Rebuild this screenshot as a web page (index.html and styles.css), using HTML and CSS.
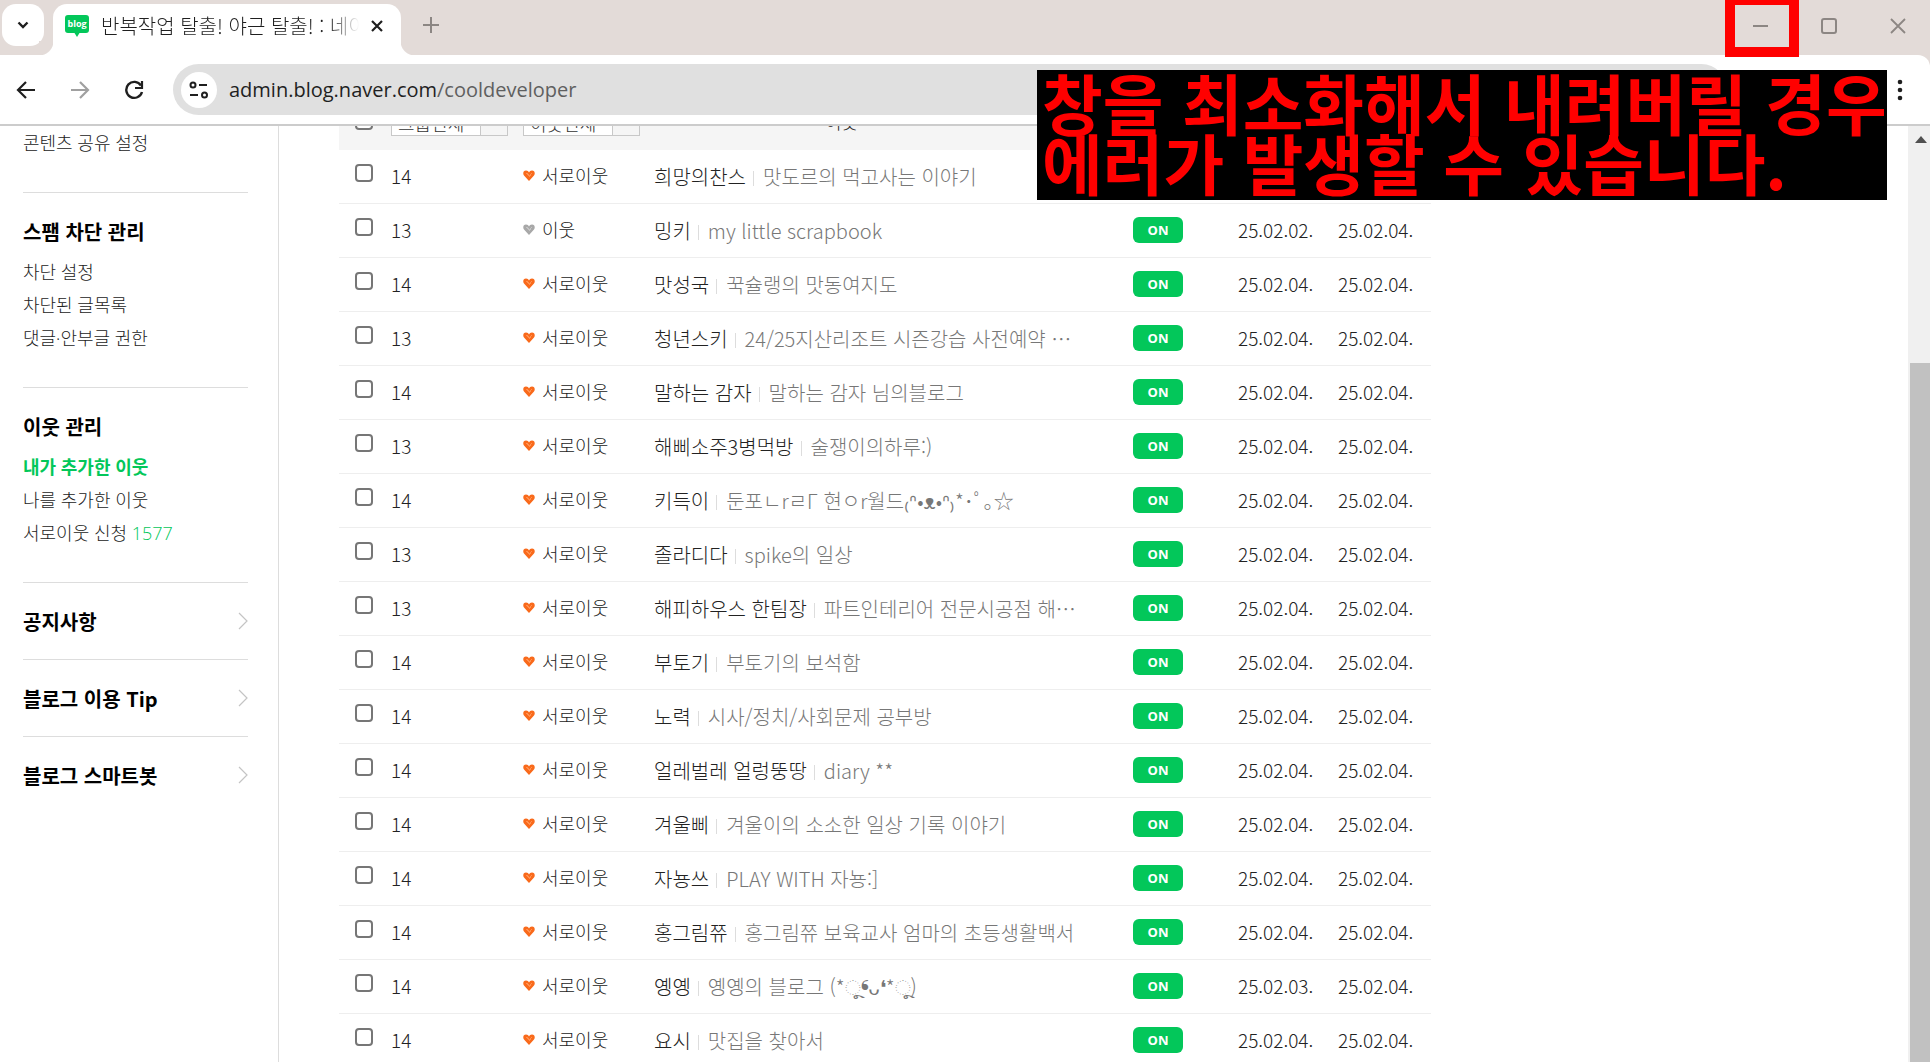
FILE: index.html
```html
<!DOCTYPE html>
<html lang="ko">
<head>
<meta charset="utf-8">
<title>반복작업 탈출! 야근 탈출! : 네이버 블로그</title>
<link rel="stylesheet" href="styles.css">
</head>
<body>
<header class="browser">
  <div class="tabstrip">
    <button class="tab-search" aria-label="탭 검색"><svg width="12" height="8" viewBox="0 0 12 8"><path d="M1.500 1.500 6 6l4.500-4.500" fill="none" stroke="#1f1f1f" stroke-width="2.400"/></svg></button>
    <div class="tab">
      <svg class="favicon" width="24" height="22" viewBox="0 0 24 22"><path d="M3 0h18a3 3 0 0 1 3 3v12a3 3 0 0 1-3 3h-6.500L12 22l-2.500-4H3a3 3 0 0 1-3-3V3a3 3 0 0 1 3-3z" fill="#03c75a"/><text x="12" y="12" text-anchor="middle" class="favicon-text">blog</text></svg>
      <span class="tab-title">반복작업 탈출! 야근 탈출! : 네이</span>
      <button class="icon-btn" aria-label="탭 닫기"><svg width="12" height="12" viewBox="0 0 12 12"><path d="M1 1l10 10M11 1 1 11" stroke="#1f1f1f" stroke-width="2.200"/></svg></button>
    </div>
    <button class="icon-btn new-tab" aria-label="새 탭"><svg width="16" height="16" viewBox="0 0 16 16"><path d="M8 0v16M0 8h16" stroke="#8c8683" stroke-width="2"/></svg></button>
    <div class="window-controls">
      <button class="icon-btn" aria-label="최소화"><svg width="16" height="16" viewBox="0 0 16 16"><path d="M1 8h15" stroke="#8c8683" stroke-width="2"/></svg></button>
      <button class="icon-btn" aria-label="최대화"><svg width="16" height="16" viewBox="0 0 16 16"><rect x="1" y="1" width="14" height="14" rx="2" fill="none" stroke="#8c8683" stroke-width="2"/></svg></button>
      <button class="icon-btn" aria-label="닫기"><svg width="16" height="16" viewBox="0 0 16 16"><path d="M1 1l14 14M15 1 1 15" stroke="#8c8683" stroke-width="1.800"/></svg></button>
    </div>
  </div>
  <div class="toolbar">
    <button class="icon-btn nav" aria-label="뒤로"><svg width="20" height="18" viewBox="0 0 20 18"><path d="M19 9H2M10 1 2 9l8 8" fill="none" stroke="#1f1f1f" stroke-width="2.200"/></svg></button>
    <button class="icon-btn nav" aria-label="앞으로"><svg width="20" height="18" viewBox="0 0 20 18"><path d="M1 9h17M10 1l8 8-8 8" fill="none" stroke="#a0a0a0" stroke-width="2.200"/></svg></button>
    <button class="icon-btn nav" aria-label="새로고침"><svg width="20" height="20" viewBox="0 0 20 20"><path d="M17 5.500A8 8 0 1 0 18 12" fill="none" stroke="#1f1f1f" stroke-width="2.400"/><path d="M18 1v7h-7" fill="none" stroke="#1f1f1f" stroke-width="2.200"/></svg></button>
    <div class="omnibox">
      <button class="site-info" aria-label="사이트 정보 보기"><svg width="20" height="18" viewBox="0 0 20 18"><g fill="none" stroke="#1f1f1f" stroke-width="2"><circle cx="4" cy="4" r="2.500"/><path d="M10 4h8"/><circle cx="15.500" cy="14" r="2.500"/><path d="M1 14h8"/></g></svg></button>
      <a class="url" href="#">admin.blog.naver.com<span class="path">/cooldeveloper</span></a>
    </div>
    <button class="icon-btn menu" aria-label="메뉴"><svg width="6" height="22" viewBox="0 0 6 22"><g fill="#1f1f1f"><circle cx="3" cy="3" r="2.300"/><circle cx="3" cy="11" r="2.300"/><circle cx="3" cy="19" r="2.300"/></g></svg></button>
  </div>
</header>
<div class="page">
  <nav class="sidebar">
    <ul class="group first">
      <li><a href="#">콘텐츠 공유 설정</a></li>
    </ul>
    <section class="section">
      <h2>스팸 차단 관리</h2>
      <ul class="group">
        <li><a href="#">차단 설정</a></li>
        <li><a href="#">차단된 글목록</a></li>
        <li><a href="#">댓글·안부글 권한</a></li>
      </ul>
    </section>
    <section class="section">
      <h2>이웃 관리</h2>
      <ul class="group">
        <li><a class="current" href="#">내가 추가한 이웃</a></li>
        <li><a href="#">나를 추가한 이웃</a></li>
        <li><a href="#">서로이웃 신청 <span class="count">1577</span></a></li>
      </ul>
    </section>
    <a class="more" href="#">공지사항<svg width="10" height="18" viewBox="0 0 10 18"><path d="M1 1l8 8-8 8"/></svg></a>
    <a class="more" href="#">블로그 이용 Tip<svg width="10" height="18" viewBox="0 0 10 18"><path d="M1 1l8 8-8 8"/></svg></a>
    <a class="more" href="#">블로그 스마트봇<svg width="10" height="18" viewBox="0 0 10 18"><path d="M1 1l8 8-8 8"/></svg></a>
  </nav>
  <main class="content">
    <table class="buddies">
      <colgroup><col class="c-check"><col class="c-group"><col class="c-kind"><col class="c-name"><col class="c-news"><col class="c-date"><col class="c-last"></colgroup>
      <thead>
        <tr>
          <th><input type="checkbox" aria-label="전체 선택"></th>
          <th><select aria-label="그룹"><option>그룹전체</option></select></th>
          <th><select aria-label="이웃 종류"><option>이웃전체</option></select></th>
          <th class="center">이웃</th>
          <th></th><th></th><th></th>
        </tr>
      </thead>
      <tbody id="rows"></tbody>
    </table>
  </main>
  <div class="scrollbar"><svg width="12" height="7" viewBox="0 0 12 7"><path d="M0 7 6 0l6 7z" fill="#505050"/></svg><div class="thumb"></div></div>
</div>
<div class="highlight"></div>
<p class="notice">창을 최소화해서 내려버릴 경우<br>에러가 발생할 수 있습니다.</p>
<script src="rows.js"></script>
</body>
</html>
```
FILE: rows.js
```js
// group, mutual buddy, nickname, blog title, last post, date added
const buddies = [
  [14, true, "희망의찬스", "맛도르의 먹고사는 이야기", "", ""],
  [13, false, "밍키", "my little scrapbook", "25.02.02.", "25.02.04."],
  [14, true, "맛성국", "꾹슐랭의 맛동여지도", "25.02.04.", "25.02.04."],
  [13, true, "청년스키", "24/25지산리조트 시즌강습 사전예약 ⋯", "25.02.04.", "25.02.04."],
  [14, true, "말하는 감자", "말하는 감자 님의블로그", "25.02.04.", "25.02.04."],
  [13, true, "해삐소주3병먹방", "술쟁이의하루:)", "25.02.04.", "25.02.04."],
  [14, true, "키득이", "둔포ㄴrㄹΓ 현ㅇr월드₍ᐢ•ᴥ•ᐢ₎*･ﾟ｡☆", "25.02.04.", "25.02.04."],
  [13, true, "졸라디다", "spike의 일상", "25.02.04.", "25.02.04."],
  [13, true, "해피하우스 한팀장", "파트인테리어 전문시공점 해⋯", "25.02.04.", "25.02.04."],
  [14, true, "부토기", "부토기의 보석함", "25.02.04.", "25.02.04."],
  [14, true, "노력", "시사/정치/사회문제 공부방", "25.02.04.", "25.02.04."],
  [14, true, "얼레벌레 얼렁뚱땅", "diary **", "25.02.04.", "25.02.04."],
  [14, true, "겨울삐", "겨울이의 소소한 일상 기록 이야기", "25.02.04.", "25.02.04."],
  [14, true, "자뇽쓰", "PLAY WITH 자뇽:]", "25.02.04.", "25.02.04."],
  [14, true, "홍그림쮸", "홍그림쮸 보육교사 엄마의 초등생활백서", "25.02.04.", "25.02.04."],
  [14, true, "옝옝", "옝옝의 블로그 (*ૂ❛ᴗ❛*ૂ)", "25.02.03.", "25.02.04."],
  [14, true, "요시", "맛집을 찾아서", "25.02.04.", "25.02.04."]
];
document.getElementById("rows").innerHTML = buddies.map(([group, mutual, name, title, last, added]) => `
  <tr>
    <td><input type="checkbox" aria-label="${name} 선택"></td>
    <td class="num">${group}</td>
    <td><span class="kind${mutual ? " mutual" : ""}"><svg width="12" height="11" viewBox="0 0 12 11"><path d="M6 11 1 5.500C-.500 3.500.300.500 3 .500c1.500 0 2.500.800 3 2 .500-1.200 1.500-2 3-2 2.700 0 3.500 3 2 5z"/><path class="shine" d="M3 3h2v1h1v1h1V4h1V3h1v1H8v2H7v1H6V6H5V5H4V4H3z"/></svg>${mutual ? "서로이웃" : "이웃"}</span></td>
    <td class="who"><a class="name" href="#">${name}</a><a class="title" href="#">${title}</a></td>
    <td>${last ? '<button class="on">ON</button>' : ""}</td>
    <td class="num">${last}</td>
    <td class="num">${added}</td>
  </tr>`).join("");
```
FILE: styles.css
```css
* { box-sizing: border-box; }
body {
  margin: 0;
  height: 100vh;
  overflow: hidden;
  display: flex;
  flex-direction: column;
  background: #fff;
  color: #222;
  font: 300 18px/33px "Noto Sans CJK KR", sans-serif;
}
a { color: inherit; text-decoration: none; }
ul { list-style: none; margin: 0; padding: 0; }
button { font: inherit; border: 0; padding: 0; background: none; }
svg { display: block; flex: none; }

.tabstrip {
  display: flex;
  align-items: flex-start;
  height: 55px;
  padding: 4px 16px 0 2px;
  background: #e3dbd8;
}
.tab-search {
  display: grid;
  place-items: center;
  width: 42px;
  height: 42px;
  border-radius: 14px;
  background: #fff;
}
.tab {
  position: relative;
  display: flex;
  align-items: center;
  gap: 12px;
  width: 348px;
  height: 51px;
  margin-left: 9px;
  padding: 0 18px 8px 12px;
  border-radius: 14px 14px 0 0;
  background: #fff;
}
.tab::before, .tab::after {
  content: "";
  position: absolute;
  bottom: 0;
  width: 14px;
  height: 14px;
}
.tab::before { right: 100%; background: radial-gradient(circle at 0 0, #e3dbd8 14px, #fff 15px); }
.tab::after { left: 100%; background: radial-gradient(circle at 100% 0, #e3dbd8 14px, #fff 15px); }
.favicon-text { font: 700 9px "Open Sans", sans-serif; fill: #fff; }
.tab-title {
  flex: 1;
  overflow: hidden;
  white-space: nowrap;
  color: #1f1f1f;
  font-size: 20px;
  mask-image: linear-gradient(to right, #000 88%, transparent);
}
.icon-btn { display: grid; place-items: center; }
.new-tab { margin: 13px 0 0 22px; }
.window-controls { display: flex; gap: 53px; margin: 14px 8px 0 auto; }

.toolbar {
  display: flex;
  align-items: center;
  height: 71px;
  padding: 0 27px 0 16px;
  border-bottom: 2px solid #ccc;
  border-radius: 0 12px 0 0;
  background: #fff;
}
.browser { background: #e3dbd8; }
.nav { width: 20px; margin-right: 34px; }
.omnibox {
  display: flex;
  align-items: center;
  flex: 1;
  gap: 12px;
  height: 51px;
  margin: 0 170px 0 -5px;
  padding-left: 8px;
  border-radius: 26px;
  background: #e0e0e0;
}
.site-info { display: grid; place-items: center; width: 36px; height: 36px; border-radius: 50%; background: #fff; }
.url { color: #1f1f1f; font: 400 20px/33px "Open Sans", sans-serif; }
.path { color: #5f5f5f; }

.page { display: flex; flex: 1; min-height: 0; overflow: hidden; }
.sidebar { flex: none; width: 279px; padding: 1px 30px 0 23px; border-right: 1px solid #ddd; }
.group { font-family: "Open Sans", "Noto Sans CJK KR", sans-serif; }
.first { padding-bottom: 32px; }
.section { padding: 22px 0 32px; border-top: 1px solid #ddd; }
.section h2 { margin: 0 0 8px; color: #000; font-size: 20px; font-weight: 700; line-height: 33px; }
.current { color: #03c75a; font-weight: 700; }
.count { color: #03c75a; }
.more {
  display: flex;
  align-items: center;
  justify-content: space-between;
  height: 77px;
  border-top: 1px solid #ddd;
  color: #000;
  font-size: 20px;
  font-weight: 700;
}
.more path { fill: none; stroke: #c4c4c4; stroke-width: 1.2; }

.content { flex: 1; min-width: 0; padding-left: 60px; }
.buddies {
  width: 100%;
  max-width: 1092px;
  margin-top: -30px;
  border-spacing: 0;
  table-layout: fixed;
}
.c-check { width: 52px; }
.c-group { width: 132px; }
.c-kind { width: 131px; }
.c-news { width: 105px; }
.c-date { width: 100px; }
.c-last { width: 93px; }
.buddies th { height: 54px; padding: 0 0 4px; background: #f5f5f5; text-align: left; font-weight: 300; }
.buddies .center { text-align: center; padding-right: 104px; }
.buddies td {
  height: 54px;
  padding: 0 0 2px;
  border-bottom: 1px solid #eee;
  white-space: nowrap;
}
.buddies .num { font-size: 19px; }
.buddies input {
  display: block;
  appearance: none;
  width: 18px;
  height: 18px;
  margin: 0 0 5px 16px;
  border: 2px solid #767676;
  border-radius: 4px;
  background: #fff;
}
.buddies th input { margin-bottom: 0; }
.buddies select {
  display: block;
  appearance: none;
  width: 117px;
  height: 30px;
  padding: 0 0 0 6px;
  border: 1px solid #c8c8c8;
  border-radius: 0;
  background: linear-gradient(to right, #fff 88px, #c8c8c8 88px, #c8c8c8 89px, #f5f5f5 89px);
  color: #333;
  font: inherit;
}
.kind { display: flex; align-items: center; gap: 7px; }
.kind path { fill: #a8a8a8; }
.mutual path { fill: #f96a1b; }
.kind .shine { fill: #c4c4c4; }
.mutual .shine { fill: #ff9050; }
.buddies .who { padding: 0; font-size: 20px; }
.title { color: #777; }
.title::before {
  content: "";
  display: inline-block;
  width: 1px;
  height: 15px;
  margin: 0 9px 0 7px;
  vertical-align: -1px;
  background: #ddd;
}
.on {
  display: block;
  width: 50px;
  height: 26px;
  border-radius: 6px;
  background: #03c75a;
  color: #fff;
  font: 700 13px/26px "Open Sans", sans-serif;
}

.scrollbar { flex: none; width: 22px; padding: 10px 0 0 2px; background: #f0f0f0; }
.scrollbar svg { margin-left: 5px; }
.thumb { height: 100%; margin-top: 220px; background: #c1c1c1; }

/* Annotations drawn over the window */
.highlight {
  position: absolute;
  top: -5px;
  right: 131px;
  width: 74px;
  height: 62px;
  border: 10px solid #f00;
}
.notice {
  position: absolute;
  top: 70px;
  right: 43px;
  width: 850px;
  height: 130px;
  margin: 0;
  padding: 1px 0 0 5px;
  background: #000;
  color: #f00;
  white-space: nowrap;
  font-size: 66px;
  font-weight: 700;
  line-height: 60px;
}
```
